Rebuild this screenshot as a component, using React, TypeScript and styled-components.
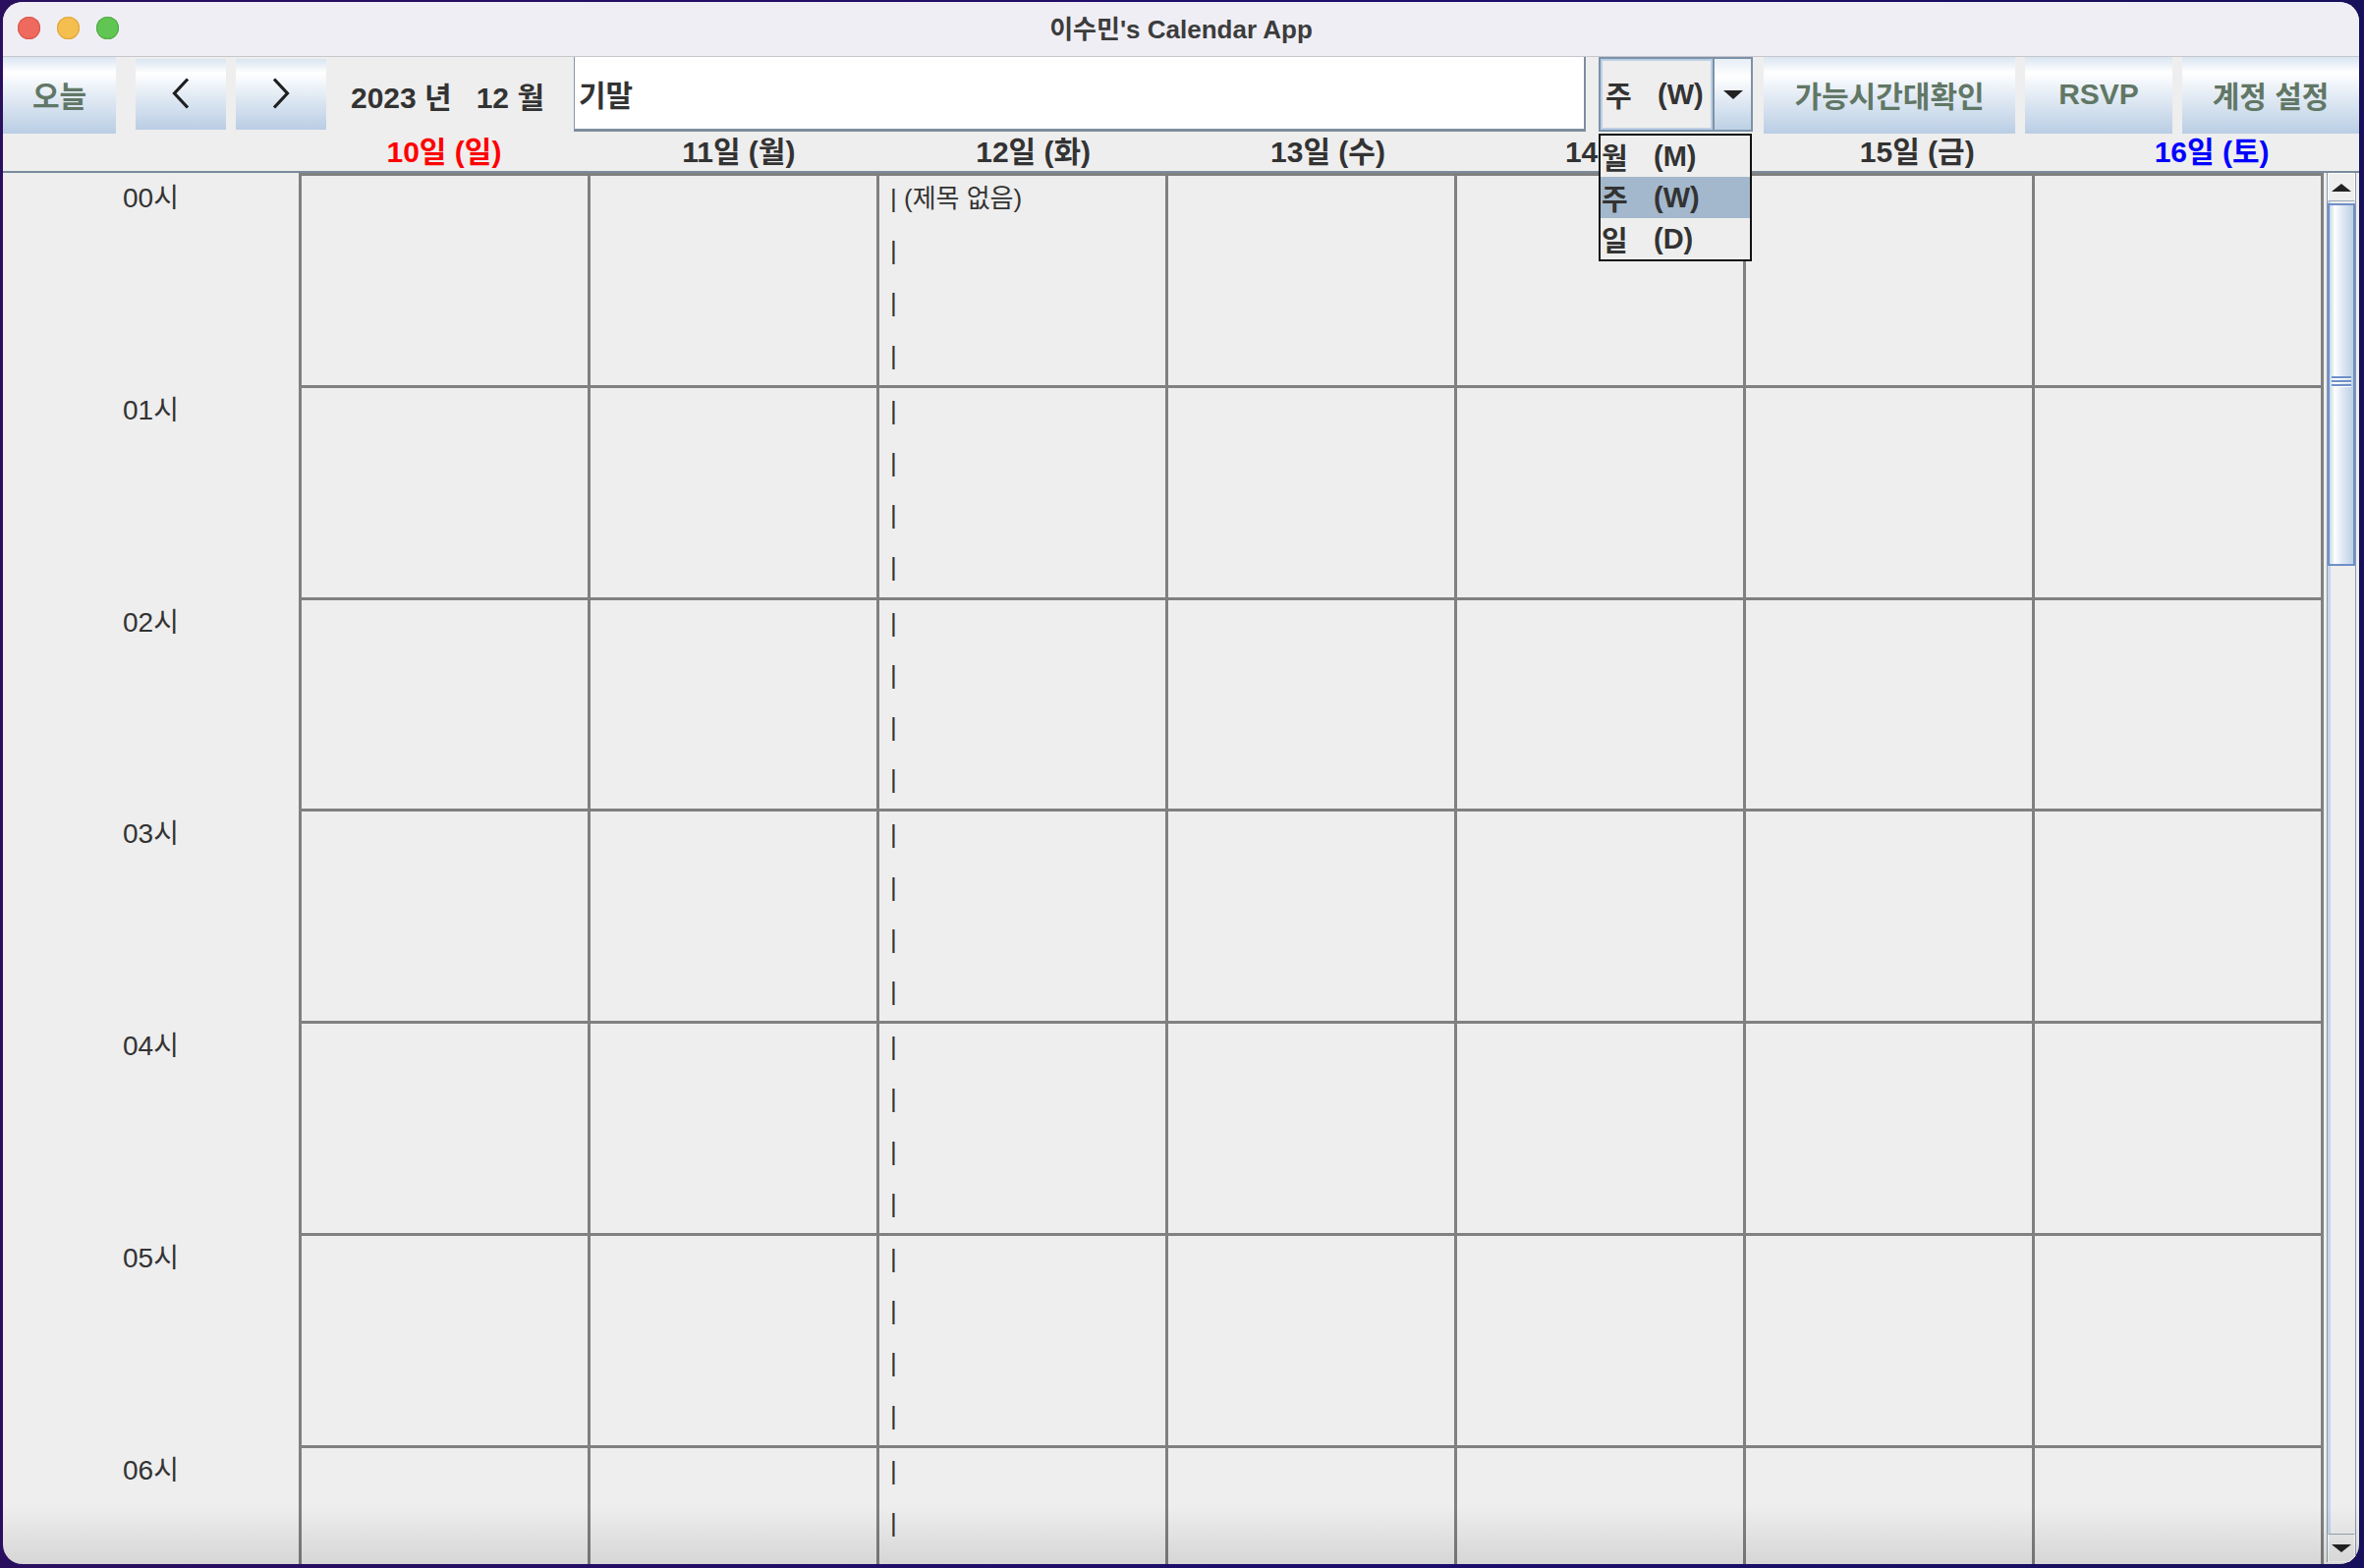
import React from "react";
import styled, { createGlobalStyle } from "styled-components";

const GlobalStyle = createGlobalStyle`
  html, body {
    margin: 0;
    padding: 0;
    background: #1f0d5c;
  }
  body {
    font-family: "Liberation Sans", "Noto Sans CJK KR", sans-serif;
    color: #333333;
  }
`;

const days = [
  { label: "10일 (일)", color: "#ff0000" },
  { label: "11일 (월)", color: "#333333" },
  { label: "12일 (화)", color: "#333333" },
  { label: "13일 (수)", color: "#333333" },
  { label: "14일 (목)", color: "#333333" },
  { label: "15일 (금)", color: "#333333" },
  { label: "16일 (토)", color: "#0000ff" },
];

const hours = Array.from({ length: 24 }, (_, i) => String(i).padStart(2, "0"));

const ROW_H = 215.8;

const Desktop = styled.div`
  width: 2406px;
  height: 1596px;
  padding: 2px 5px 4px 3px;
  box-sizing: border-box;
  background: linear-gradient(90deg, #2b0f5f 0%, #1c0e6c 60%, #17105a 100%);
`;

const Window = styled.div`
  position: relative;
  height: 100%;
  border-radius: 20px;
  overflow: hidden;
  background: #eeeeee;
  display: flex;
  flex-direction: column;
`;

const TitleBar = styled.div`
  height: 56px;
  box-sizing: border-box;
  flex-shrink: 0;
  background: #f0eef5;
  border-bottom: 1px solid #c7c6cd;
  display: grid;
  grid-template-columns: 1fr auto 1fr;
  align-items: center;
`;

const Lights = styled.div`
  display: flex;
  gap: 17px;
  padding-left: 15px;
  padding-bottom: 2px;
`;

const Light = styled.span<{ $color: string; $edge: string }>`
  width: 23px;
  height: 23px;
  border-radius: 50%;
  background: ${(p) => p.$color};
  box-shadow: inset 0 0 0 1px ${(p) => p.$edge};
`;

const Title = styled.div`
  font-size: 26px;
  font-weight: bold;
  color: #3c3c3c;
  padding-bottom: 4px;
`;

const Toolbar = styled.div`
  height: 78px;
  flex-shrink: 0;
  display: flex;
  align-items: flex-start;
`;

const GradientButton = styled.div<{ $w: number; $gap?: number }>`
  width: ${(p) => p.$w}px;
  height: 78px;
  margin-left: ${(p) => p.$gap ?? 0}px;
  flex-shrink: 0;
  display: flex;
  align-items: center;
  justify-content: center;
  background: linear-gradient(
    180deg,
    #d9e5f1 0%,
    #ffffff 20%,
    #e4ecf5 50%,
    #b9cde4 100%
  );
  font-size: 30px;
  font-weight: bold;
  color: #617766;
  padding-bottom: 2px;
  box-sizing: border-box;
`;

const NavButton = styled(GradientButton)`
  height: 72px;
  margin-top: 2px;
`;

const DateLabel = styled.div`
  width: 252px;
  height: 78px;
  flex-shrink: 0;
  box-sizing: border-box;
  padding-left: 25px;
  display: flex;
  align-items: center;
  font-size: 30px;
  font-weight: bold;
  color: #333333;
  white-space: pre;
`;

const SearchField = styled.div`
  flex: 1;
  height: 76px;
  box-sizing: border-box;
  background: #ffffff;
  border-left: 1px solid #8795a4;
  border-right: 2px solid #7e8d9d;
  border-bottom: 3px solid #7e8d9d;
  display: flex;
  align-items: center;
  padding-left: 4px;
  font-size: 30px;
  font-weight: bold;
  color: #333333;
`;

const Combo = styled.div`
  width: 157px;
  height: 76px;
  margin-left: 13px;
  flex-shrink: 0;
  box-sizing: border-box;
  border: 2px solid #7c92a9;
  display: flex;
`;

const ComboValue = styled.div`
  flex: 1;
  box-sizing: border-box;
  border: 2px solid #bcd0e5;
  background: #eeeeee;
  display: flex;
  align-items: center;
  padding-left: 3px;
`;

const ComboArrow = styled.div`
  width: 37px;
  border-left: 2px solid #7c92a9;
  display: flex;
  align-items: center;
  justify-content: center;
  background: linear-gradient(180deg, #e6eef6 0%, #ffffff 25%, #bcd0e5 100%);
`;

const OptionText = styled.div`
  display: flex;
  align-items: center;
  font-size: 29px;
  font-weight: bold;
  color: #333333;
`;

const OptionKey = styled.span`
  width: 53px;
`;

const Popup = styled.div`
  position: absolute;
  left: 1624px;
  top: 134px;
  width: 156px;
  box-sizing: border-box;
  border: 2px solid #111111;
  background: #eeeeee;
  z-index: 5;
`;

const PopupItem = styled.div<{ $active?: boolean }>`
  height: 42px;
  display: flex;
  align-items: center;
  padding-left: 1px;
  background: ${(p) => (p.$active ? "#a3b8cc" : "transparent")};
`;

const DayHeader = styled.div`
  height: 40px;
  flex-shrink: 0;
  box-sizing: border-box;
  border-bottom: 2px solid #7b8b9b;
  display: flex;
  padding-left: 299px;
`;

const DayName = styled.div<{ $color: string }>`
  flex: 1;
  display: flex;
  align-items: center;
  justify-content: center;
  font-size: 30px;
  font-weight: bold;
  line-height: 1;
  color: ${(p) => p.$color};
  white-space: nowrap;
`;

const Body = styled.div`
  flex: 1;
  min-height: 0;
  display: flex;
  overflow: hidden;
`;

const TimeColumn = styled.div`
  width: 301px;
  flex-shrink: 0;
  padding-top: 3px;
`;

const TimeLabel = styled.div`
  height: ${ROW_H}px;
  box-sizing: border-box;
  text-align: center;
  font-size: 28px;
  line-height: 28px;
  padding-top: 9px;
  color: #333333;
`;

const DayGrid = styled.div`
  width: 2061px;
  flex-shrink: 0;
  align-self: flex-start;
  box-sizing: border-box;
  border-left: 3px solid #808080;
  border-top: 3px solid #808080;
  display: grid;
  grid-template-columns: repeat(7, 1fr);
  grid-auto-rows: ${ROW_H}px;
`;

const Cell = styled.div`
  box-sizing: border-box;
  border-right: 3px solid #808080;
  border-bottom: 3px solid #808080;
  display: flex;
  flex-direction: column;
`;

const EventLine = styled.div`
  flex: 1;
  padding-left: 11px;
  padding-top: 8px;
  font-size: 26px;
  line-height: 30px;
  color: #333333;
  white-space: pre;
`;

const ScrollBar = styled.div`
  width: 30px;
  margin-left: 3px;
  margin-bottom: 2px;
  flex-shrink: 0;
  box-sizing: border-box;
  border-left: 1px solid #8c9aaa;
  border-right: 1px solid #8c9aaa;
  background: #eeeeee;
  display: flex;
  flex-direction: column;
  box-shadow: inset 3px 0 0 #c3d5ea;
`;

const ScrollButton = styled.div`
  height: 29px;
  flex-shrink: 0;
  box-sizing: border-box;
  background: #eeeeee;
  border: 1px solid #ffffff;
  border-bottom-color: #9aa6b2;
  display: flex;
  align-items: center;
  justify-content: center;
`;

const ScrollDown = styled(ScrollButton)`
  margin-top: auto;
  border-bottom-color: #ffffff;
  border-top-color: #9aa6b2;
`;

const Thumb = styled.div`
  height: 369px;
  margin-top: 2px;
  flex-shrink: 0;
  box-sizing: border-box;
  border: 2px solid #6f8fc8;
  background: linear-gradient(
    90deg,
    #c3d5ea 0%,
    #ffffff 22%,
    #e2ebf5 50%,
    #bcd0e5 100%
  );
  display: flex;
  align-items: center;
  justify-content: center;
  padding-bottom: 8px;
`;

const Grip = styled.div`
  width: 20px;
  display: flex;
  flex-direction: column;
  gap: 2px;
  & > span {
    height: 2px;
    background: #6f8fc8;
    box-shadow: 0 1px 0 #ffffff;
  }
`;

const BottomShade = styled.div`
  position: absolute;
  left: 0;
  right: 0;
  bottom: 0;
  height: 60px;
  background: linear-gradient(180deg, rgba(0, 0, 0, 0) 0%, rgba(0, 0, 0, 0.1) 100%);
  pointer-events: none;
`;

const Chevron: React.FC<{ dir: "left" | "right" }> = ({ dir }) => (
  <svg width="18" height="32" viewBox="0 0 18 32">
    <polyline
      points={dir === "left" ? "16,1.5 2.5,16 16,30.5" : "2,1.5 15.5,16 2,30.5"}
      fill="none"
      stroke="#1f1f1f"
      strokeWidth="3.2"
    />
  </svg>
);

const Triangle: React.FC<{ up?: boolean; w?: number; h?: number }> = ({ up, w = 20, h = 9 }) => (
  <svg width={w} height={h} viewBox={`0 0 ${w} ${h}`}>
    <polygon
      points={up ? `0,${h} ${w / 2},0 ${w},${h}` : `0,0 ${w},0 ${w / 2},${h}`}
      fill="#222222"
    />
  </svg>
);

const App: React.FC = () => {
  return (
    <Desktop>
      <GlobalStyle />
      <Window>
        <TitleBar>
          <Lights>
            <Light $color="#ee6a5f" $edge="#d85a50" />
            <Light $color="#f5bf4f" $edge="#dea63e" />
            <Light $color="#61c554" $edge="#52ad46" />
          </Lights>
          <Title>이수민's Calendar App</Title>
          <div />
        </TitleBar>

        <Toolbar>
          <GradientButton $w={115}>오늘</GradientButton>
          <NavButton $w={92} $gap={20}>
            <Chevron dir="left" />
          </NavButton>
          <NavButton $w={92} $gap={10}>
            <Chevron dir="right" />
          </NavButton>
          <DateLabel>{"2023 년   12 월"}</DateLabel>
          <SearchField>기말</SearchField>
          <Combo>
            <ComboValue>
              <OptionText>
                <OptionKey>주</OptionKey>(W)
              </OptionText>
            </ComboValue>
            <ComboArrow>
              <Triangle />
            </ComboArrow>
          </Combo>
          <GradientButton $w={256} $gap={11}>가능시간대확인</GradientButton>
          <GradientButton $w={150} $gap={10}>RSVP</GradientButton>
          <GradientButton $w={180} $gap={10}>계정 설정</GradientButton>
        </Toolbar>

        <DayHeader>
          {days.map((d) => (
            <DayName key={d.label} $color={d.color}>
              {d.label}
            </DayName>
          ))}
        </DayHeader>

        <Body>
          <TimeColumn>
            {hours.map((h) => (
              <TimeLabel key={h}>{h}시</TimeLabel>
            ))}
          </TimeColumn>
          <DayGrid>
            {hours.map((h, r) =>
              days.map((d, c) => (
                <Cell key={`${h}-${c}`}>
                  {c === 2 &&
                    [0, 1, 2, 3].map((i) => (
                      <EventLine key={i}>{r === 0 && i === 0 ? "| (제목 없음)" : "|"}</EventLine>
                    ))}
                </Cell>
              ))
            )}
          </DayGrid>
          <ScrollBar>
            <ScrollButton>
              <Triangle up w={20} h={8} />
            </ScrollButton>
            <Thumb>
              <Grip>
                <span />
                <span />
                <span />
              </Grip>
            </Thumb>
            <ScrollDown>
              <Triangle w={20} h={8} />
            </ScrollDown>
          </ScrollBar>
        </Body>

        <Popup>
          <PopupItem>
            <OptionText>
              <OptionKey>월</OptionKey>(M)
            </OptionText>
          </PopupItem>
          <PopupItem $active>
            <OptionText>
              <OptionKey>주</OptionKey>(W)
            </OptionText>
          </PopupItem>
          <PopupItem>
            <OptionText>
              <OptionKey>일</OptionKey>(D)
            </OptionText>
          </PopupItem>
        </Popup>

        <BottomShade />
      </Window>
    </Desktop>
  );
};

export default App;
